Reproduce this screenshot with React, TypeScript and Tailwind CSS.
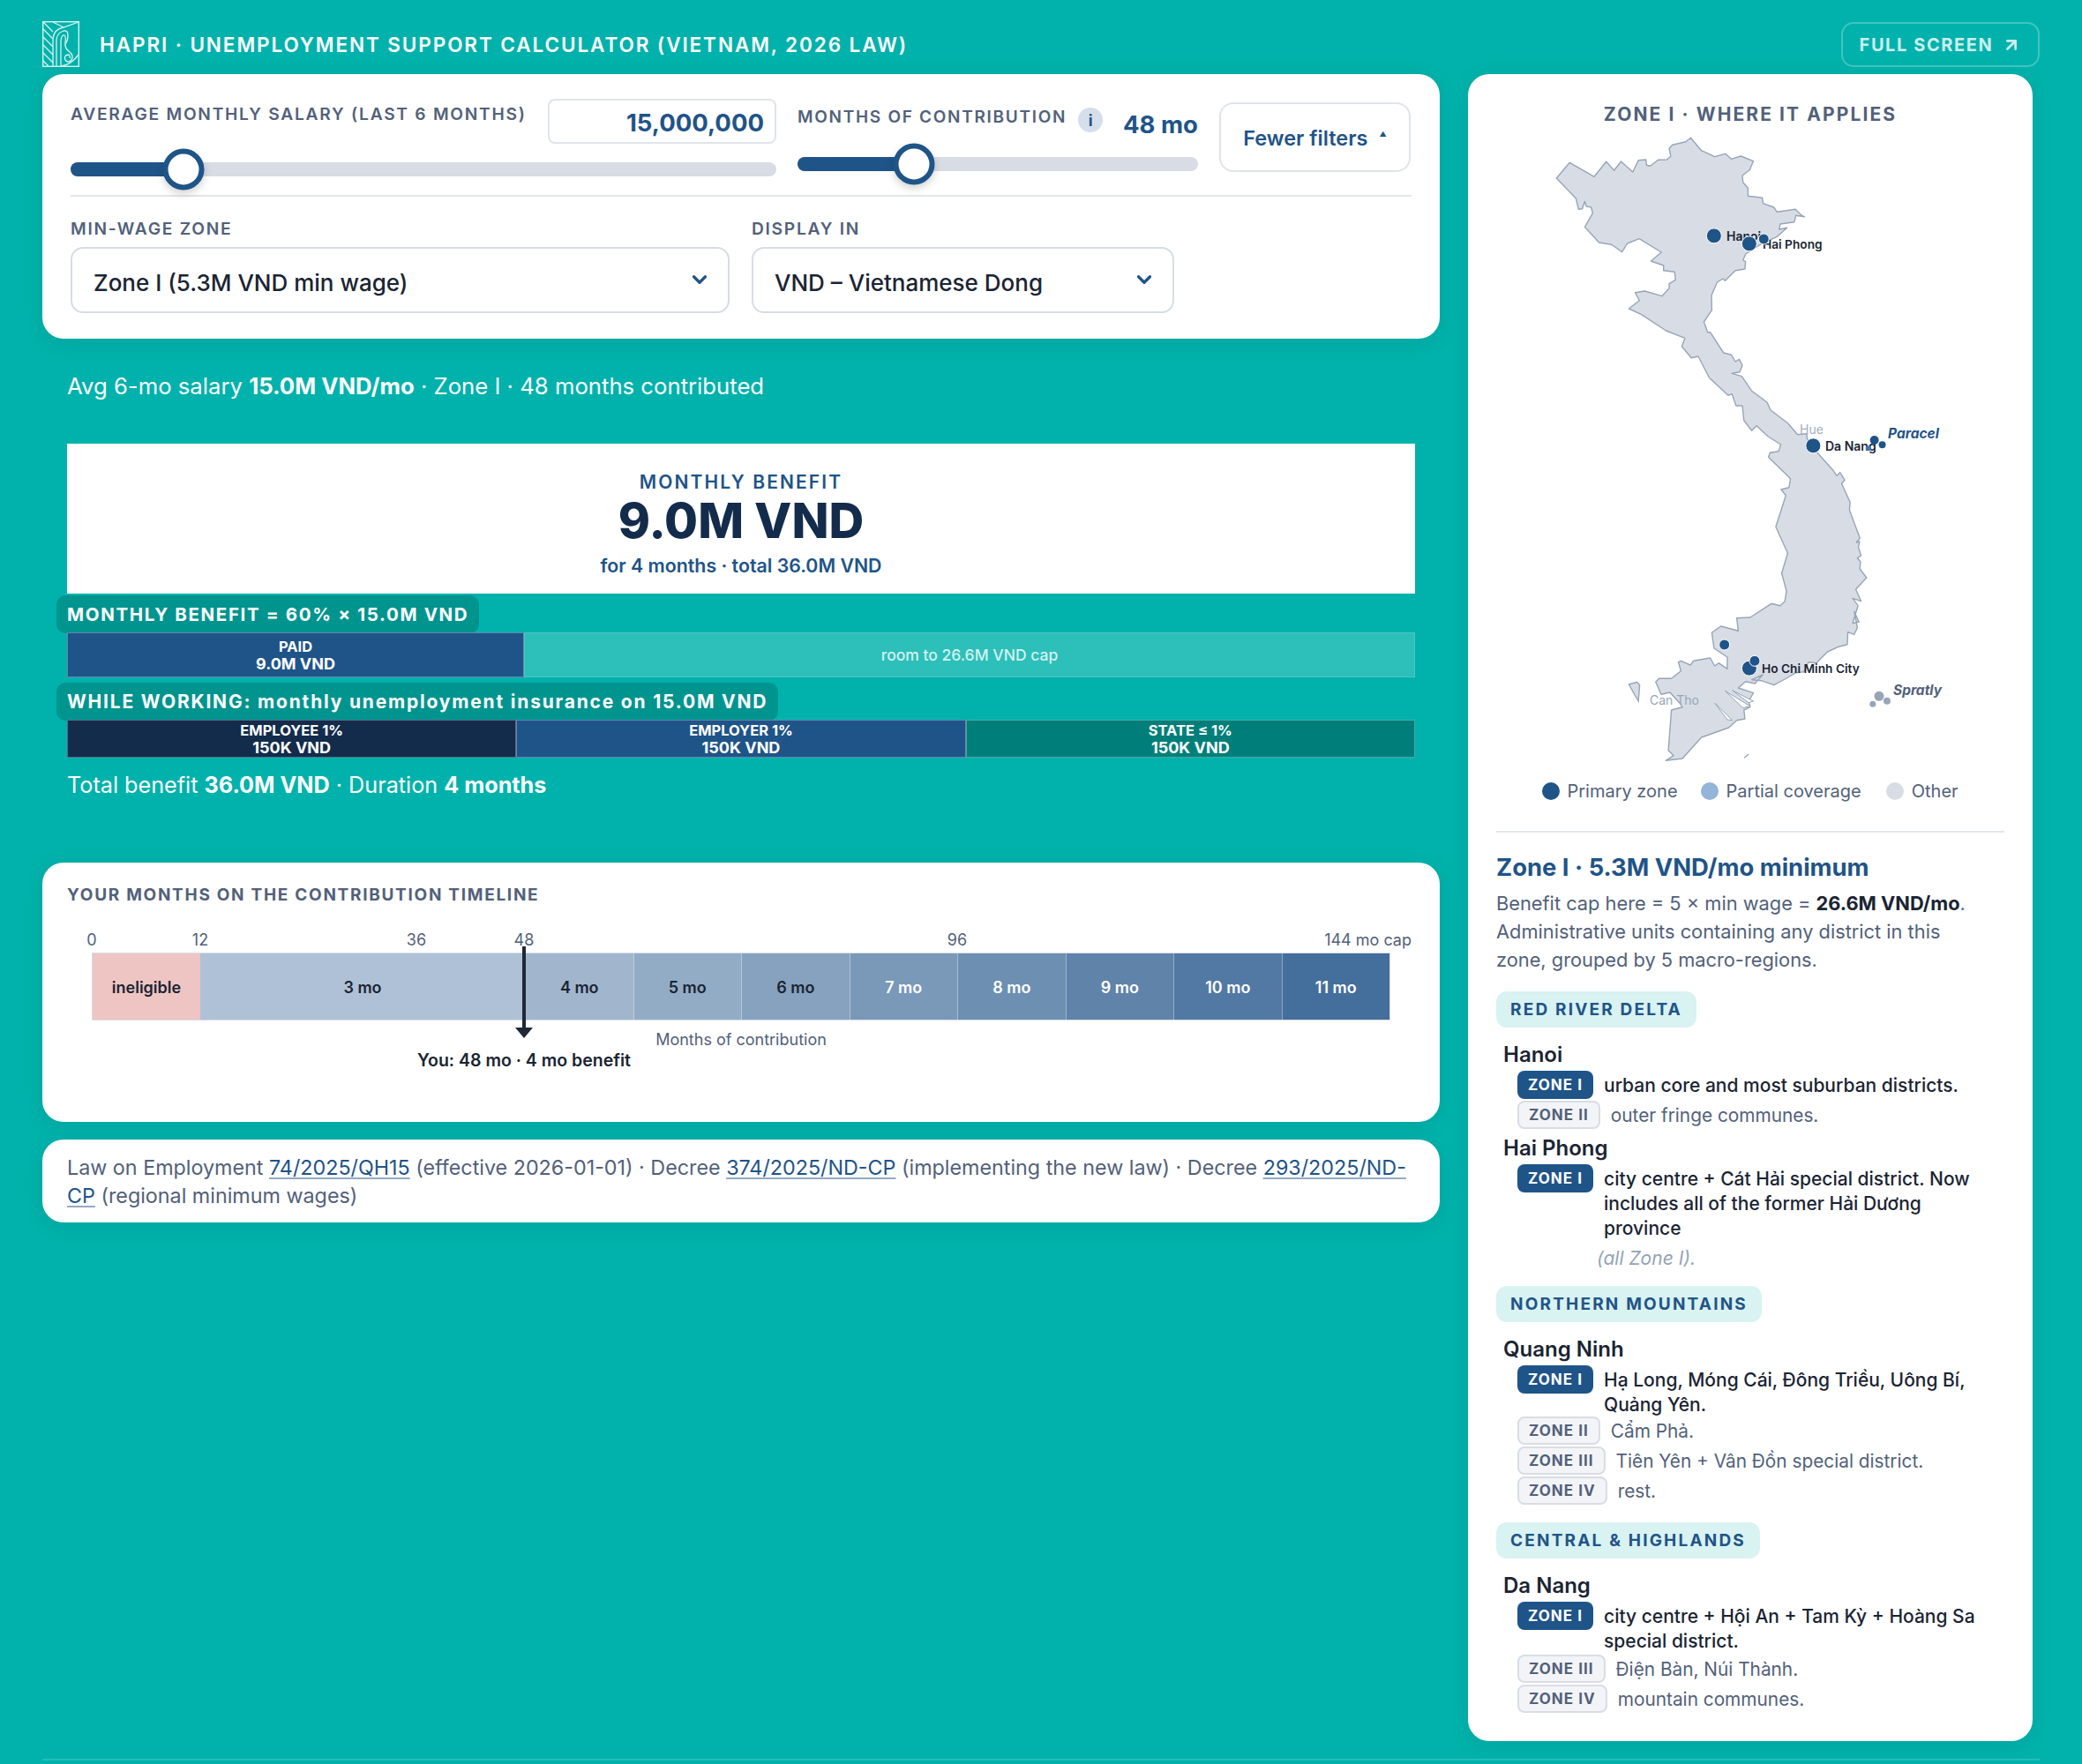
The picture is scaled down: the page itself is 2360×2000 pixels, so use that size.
import { ArrowUpRight, ChevronDown } from 'lucide-react';

const INK = 'text-[#1a2433]';

// map outline, read off in crop coordinates: x = 1700 + px / 2.8, y = base + py / 3
const north: number[][] = [
  [180,306],[222,253],[300,301],[338,250],[363,280],[385,249],[422,285],[440,245],[464,243],[466,262],[478,265],[503,244],[530,243],[543,232],[538,205],[548,193],[590,182],[606,169],[640,212],[682,233],[716,223],[735,241],[765,231],[805,248],[793,278],[770,297],[772,320],[788,340],[788,367],[833,373],[836,392],[870,405],[880,421],[938,412],[958,432],[967,437],[940,433],[935,455],[890,462],[887,480],[912,475],[880,505],[830,530],[800,550],[780,565],[772,585],[780,590],[778,615],[748,620],[715,655],[708,648],[690,660],[672,705],[673,755],[648,795],[660,830],[668,830],[710,900],[735,907],[748,930],[760,922],[770,942],[762,965],[737,970],[768,980],[800,1030],[848,1068],[860,1095],[890,1120],[915,1140],[945,1178],[975,1175],[975,1190],[1000,1230],[1058,1300],[1070,1318],[1080,1307],[1095,1333],
];
const south: number[][] = [
  [1085,205],[1112,268],[1110,295],[1143,390],[1132,405],[1142,402],[1138,420],[1147,450],[1135,458],[1145,470],[1143,495],[1164,525],[1130,565],[1147,605],[1120,595],[1137,620],[1120,680],[1140,675],[1125,640],[1135,695],[1125,718],[1105,710],[1103,752],[1075,760],[1040,777],[1005,815],[980,812],[965,845],[940,848],[905,870],[870,890],[830,875],[800,872],[835,855],[810,885],[780,878],[757,900],[805,917],[790,945],[795,965],[775,975],[778,1005],[752,1010],[727,1035],[640,1068],[580,1140],[527,1147],[552,1130],[535,1112],[545,975],[580,965],[570,950],[540,915],[512,922],[495,880],[505,868],[545,868],[575,842],[567,812],[575,808],[605,822],[615,808],[668,798],[682,825],[695,815],[722,835],[722,795],[680,765],[673,712],[702,690],[757,706],[752,662],[795,660],[862,613],[890,620],[905,605],[910,570],[895,510],[914,442],[876,352],[908,245],[893,225],[918,218],[923,188],[853,115],[858,100],[885,95],[892,72],
];
const northBack: number[][] = [
  [852,1185],[815,1148],[800,1165],[775,1130],[770,1080],[750,1080],[737,1040],[725,1045],[665,985],[630,912],[608,917],[578,878],[588,850],[528,825],[450,770],[410,750],[443,722],[430,695],[460,690],[515,707],[538,680],[538,665],[558,652],[555,625],[520,620],[520,603],[480,588],[513,558],[443,512],[405,528],[388,557],[355,532],[315,525],[270,472],[295,425],[290,405],[275,402],[270,385],[262,410],[250,412],[242,375],
];

const px = (x: number) => 1700 + x / 2.8;
const n = (y: number) => 100 + y / 3;
const s = (y: number) => 480 + y / 3;
const toPath = (pts: number[][], f: (y: number) => number) =>
  pts.map(([x, y]) => `${px(x).toFixed(1)} ${f(y).toFixed(1)}`).join(' L');

const mainland = `M${toPath(north, n)} L${toPath(south, s)} L${toPath(northBack, n)} Z`;
const island = `M${toPath([[410,888],[435,880],[444,890],[440,945]], s)} Z`;
const slits = [
  [[715,910],[795,962],[772,968]],
  [[738,908],[805,945],[790,950]],
  [[683,952],[738,1010],[722,1008]],
];

function VietnamMap() {
  const dot = (x: number, y: number, r: number, fill = '#1f5488', halo = true) => (
    <circle cx={px(x)} cy={y} r={r} fill={fill} stroke={halo ? '#fff' : 'none'} strokeWidth={1} />
  );
  return (
    <svg viewBox="1664 150 640 730" className="block w-[640px] h-[730px]" fontFamily="Inter, sans-serif">
      <path d={mainland} fill="#d8dde5" stroke="#97a5b7" strokeWidth={1.4} strokeLinejoin="round" />
      <path d={island} fill="#d8dde5" stroke="#97a5b7" strokeWidth={1.4} />
      {slits.map((p, i) => (
        <path key={i} d={`M${toPath(p, s)} Z`} fill="#fff" stroke="#97a5b7" strokeWidth={1} />
      ))}
      <path d={`M${px(776)} ${s(1138)} L${px(790)} ${s(1125)}`} stroke="#97a5b7" strokeWidth={1.4} />

      <text x={2040} y={492} fontSize={14} fill="#a3afbf">Hue</text>
      <text x={1870} y={799} fontSize={14} fill="#97a5b7">Can Tho</text>
      <text x={1957} y={273} fontSize={14} fontWeight={600} fill="#1a2433">Hanoi</text>
      <text x={1998} y={282} fontSize={13.7} fontWeight={600} fill="#1a2433">Hai Phong</text>
      <text x={2069} y={511} fontSize={14} fontWeight={600} fill="#1a2433">Da Nang</text>
      <text x={1997} y={763} fontSize={13.7} fontWeight={600} fill="#1a2433">Ho Chi Minh City</text>
      <text x={2140} y={497} fontSize={15.5} fontWeight={700} fontStyle="italic" fill="#1f5488">Paracel</text>
      <text x={2146} y={788} fontSize={15.5} fontWeight={700} fontStyle="italic" fill="#52617a">Spratly</text>

      {dot(680, n(502), 8.5)}
      {dot(792, n(529), 8.5)}
      {dot(838, n(513), 6)}
      {dot(995, n(1216), 8.5)}
      {dot(1189, n(1197), 5, '#1f5488', false)}
      {dot(1214, n(1213), 4, '#1f5488', false)}
      {dot(1170, n(1225), 3, '#3f78ad', false)}
      {dot(792, s(833), 8.5)}
      {dot(809, s(808), 6)}
      {dot(713, s(753), 6)}
      {dot(1204, s(928), 5.5, '#98a5b6', false)}
      {dot(1229, s(944), 4, '#98a5b6', false)}
      {dot(1184, s(955), 3.5, '#98a5b6', false)}
    </svg>
  );
}

function Logo() {
  return (
    <svg viewBox="0 0 42 52" className="w-[42px] h-[52px]" fill="none" stroke="#d8f3f1" strokeWidth={1.3}>
      <rect x="0.7" y="0.7" width="40.6" height="50.6" strokeWidth={1.4} />
      <path d="M12 51 V20 Q13 9 24 7 L41 1" />
      <path d="M16 51 V21 Q17 13 24 11 Q29 10 29 16 Q29 22 26 26" />
      <path d="M21 51 V22 Q22 15 25 16 Q27 17 26 24 Q25 31 31 35 Q36 39 33 44 Q29 48 26 44 Q24 39 29 38 Q32 38 31 42" />
      <path d="M21 51 Q32 50 41 38" />
      <path d="M1 9 L12 20 M1 18 L12 29 M1 27 L12 38 M1 36 L12 47 M1 45 L7 51" />
      <path d="M12 1 L24 7 M1 1 L12 12" />
    </svg>
  );
}

function Slider({ width, fill, thumb }: { width: string; fill: string; thumb: string }) {
  return (
    <div className={`relative h-[16px] rounded-full bg-[#d8dde5] ${width}`}>
      <div className={`h-full rounded-full bg-[#1f5488] ${fill}`} />
      <div className={`absolute top-1/2 -translate-y-1/2 -translate-x-1/2 w-[47px] h-[47px] rounded-full bg-white border-[6px] border-[#1f5488] shadow-[0_4px_10px_rgba(0,0,0,0.18)] ${thumb}`} />
    </div>
  );
}

function Select({ label, value, width }: { label: string; value: string; width: string }) {
  return (
    <div className={width}>
      <div className="text-[19.2px] leading-[24px] font-semibold tracking-[0.09em] text-[#52617a]">{label}</div>
      <div className="mt-[9px] h-[75px] rounded-[14px] border-2 border-[#d8dde5] flex items-center justify-between pl-[24px] pr-[19px]">
        <span className={`pt-[5px] text-[26px] font-medium ${INK}`}>{value}</span>
        <ChevronDown className="w-[26px] h-[26px] text-[#1f5488] -mt-[1px]" strokeWidth={3} />
      </div>
    </div>
  );
}

function BarCell({ top, bottom, className }: { top: string; bottom: string; className: string }) {
  return (
    <div className={`flex flex-col items-center justify-center text-white font-bold leading-[19px] text-[18px] border border-white/30 ${className}`}>
      <span className="text-[16.5px]">{top}</span>
      <span>{bottom}</span>
    </div>
  );
}

const steps = [
  { label: '4 mo', cls: 'bg-[#a1b6cd] text-[#1a2433]' },
  { label: '5 mo', cls: 'bg-[#93acc6] text-[#1a2433]' },
  { label: '6 mo', cls: 'bg-[#86a2bf] text-[#1a2433]' },
  { label: '7 mo', cls: 'bg-[#7a99b9] text-white' },
  { label: '8 mo', cls: 'bg-[#6d8fb2] text-white' },
  { label: '9 mo', cls: 'bg-[#6083aa] text-white' },
  { label: '10 mo', cls: 'bg-[#5279a4] text-white' },
  { label: '11 mo', cls: 'bg-[#446e9c] text-white' },
];

const ticks = [
  { label: '0', left: 'left-[56px]' },
  { label: '12', left: 'left-[179px]' },
  { label: '36', left: 'left-[424px]' },
  { label: '48', left: 'left-[546px]' },
  { label: '96', left: 'left-[1037px]' },
];

function Timeline() {
  return (
    <div className="h-[294px] rounded-[24px] bg-white shadow-[0_4px_24px_rgba(0,0,0,0.08)] relative mt-[70px] -mx-[28px]">
      <div className="pt-[25px] pl-[28px] text-[19px] leading-[24px] font-bold tracking-[0.09em] text-[#52617a]">
        YOUR MONTHS ON THE CONTRIBUTION TIMELINE
      </div>
      <div className="ml-[56px] mt-[53px] w-[1472px] h-[77px] flex text-[18px] font-semibold border border-[#d5dde7]">
        <div className="w-[122px] pt-[2px] flex items-center justify-center bg-[#efc5c3] text-[#1a2433]">ineligible</div>
        <div className="w-[368px] pt-[2px] flex items-center justify-center bg-[#afc1d6] text-[#1a2433]">3 mo</div>
        {steps.map((step) => (
          <div key={step.label} className={`flex-1 pt-[2px] flex items-center justify-center border-l border-white/40 ${step.cls}`}>
            {step.label}
          </div>
        ))}
      </div>
      {ticks.map((tick) => (
        <span key={tick.label} className={`absolute top-[76px] -translate-x-1/2 text-[18px] leading-[24px] text-[#52617a] ${tick.left}`}>
          {tick.label}
        </span>
      ))}
      <span className="absolute top-[76px] right-[32px] text-[18px] leading-[24px] text-[#52617a]">144 mo cap</span>
      <svg className="absolute left-[536px] top-[95px] w-[20px] h-[104px]" viewBox="0 0 20 104">
        <rect x="8" y="0" width="4" height="94" fill="#1f2937" />
        <path d="M0 92 H20 L10 104 Z" fill="#1f2937" />
      </svg>
      <span className="absolute left-[792px] top-[189px] -translate-x-1/2 text-[18px] leading-[24px] text-[#52617a] whitespace-nowrap">Months of contribution</span>
      <span className={`absolute left-[546px] top-[212px] -translate-x-1/2 text-[19.5px] leading-[24px] font-semibold whitespace-nowrap ${INK}`}>You: 48 mo · 4 mo benefit</span>
    </div>
  );
}

const Law = ({ children }: { children: React.ReactNode }) => (
  <a className="text-[#1f5488] underline decoration-[#94aac4] decoration-2 underline-offset-[3px]">{children}</a>
);

function Badge({ zone, primary }: { zone: string; primary?: boolean }) {
  return primary ? (
    <span className="shrink-0 h-[32px] pt-[2px] rounded-[8px] bg-[#1f5488] text-white text-[17px] font-bold tracking-[0.06em] px-[12px] flex items-center">{zone}</span>
  ) : (
    <span className="shrink-0 h-[32px] pt-[2px] rounded-[8px] bg-[#f3f4f7] border-2 border-[#d8dde5] text-[#52617a] text-[17px] font-bold tracking-[0.06em] px-[11px] flex items-center">{zone}</span>
  );
}

function ZoneRow({ zone, primary, children, tight }: { zone: string; primary?: boolean; children: React.ReactNode; tight?: boolean }) {
  return (
    <div className={`flex items-start gap-[12px] ml-[24px] ${tight ? '-mb-[2px]' : ''}`}>
      <Badge zone={zone} primary={primary} />
      <div className={`max-w-[424px] pt-[3px] -mb-[1px] leading-[28px] ${primary ? `text-[21px] font-medium ${INK}` : 'text-[20.8px] text-[#52617a]'}`}>{children}</div>
    </div>
  );
}

function RegionChip({ children, className }: { children: React.ReactNode; className: string }) {
  return (
    <div className={`w-fit h-[41px] rounded-[12px] bg-[#d9f2f2] px-[16px] pt-[1px] flex items-center text-[19px] font-bold tracking-[0.115em] text-[#1f5488] ${className}`}>
      {children}
    </div>
  );
}

function Province({ name, className, children }: { name: string; className: string; children: React.ReactNode }) {
  return (
    <div className={className}>
      <div className={`ml-[8px] pt-[2px] -mb-[2px] text-[24px] leading-[30px] font-semibold ${INK}`}>{name}</div>
      <div className="mt-[5px] flex flex-col gap-[2px]">{children}</div>
    </div>
  );
}

export default function App() {
  return (
    <div className="min-h-[2000px] bg-[#00b2ab] px-[48px] font-['Inter',sans-serif]">
      {/* Header */}
      <header className="h-[84px] flex items-center justify-between pt-[16px]">
        <div className="flex items-center gap-[23px]">
          <Logo />
          <span className="pt-[2px] text-[22.5px] font-semibold tracking-[0.085em] text-white">
            HAPRI · UNEMPLOYMENT SUPPORT CALCULATOR (VIETNAM, 2026 LAW)
          </span>
        </div>
        <button className="h-[51px] w-[225px] pt-[2px] rounded-[14px] border-2 border-white/25 flex items-center justify-center gap-[10px] text-[20px] font-bold tracking-[0.08em] text-[#cdeeee]">
          FULL SCREEN
          <ArrowUpRight className="w-[22px] h-[22px]" strokeWidth={3} />
        </button>
      </header>

      <div className="flex items-start gap-[32px]">
        {/* Left column */}
        <div className="w-[1584px]">
          <section className="h-[300px] rounded-[24px] bg-white shadow-[0_4px_24px_rgba(0,0,0,0.08)] px-[32px] pt-[28px]">
            <div className="h-[109px] flex items-start gap-[24px]">
              <div className="w-[800px]">
                <div className="flex items-start justify-between">
                  <span className="mt-[5px] text-[19.2px] leading-[24px] font-semibold tracking-[0.09em] text-[#52617a]">
                    AVERAGE MONTHLY SALARY (LAST 6 MONTHS)
                  </span>
                  <input
                    readOnly
                    value="15,000,000"
                    className="w-[259px] h-[51px] rounded-[8px] border-2 border-[#e0e4ea] pr-[12px] pt-[3px] text-right text-[27.5px] font-bold text-[#1f5488] outline-none"
                  />
                </div>
                <div className="mt-[21px]">
                  <Slider width="w-[800px]" fill="w-[128px]" thumb="left-[128px]" />
                </div>
              </div>
              <div className="w-[454px]">
                <div className="h-[66px] flex items-start">
                  <span className="mt-[9px] text-[19px] leading-[24px] font-semibold tracking-[0.09em] text-[#52617a] whitespace-nowrap">
                    MONTHS OF CONTRIBUTION
                  </span>
                  <span className="ml-[13px] mt-[10px] w-[28px] h-[28px] rounded-full bg-[#d5dfeb] text-[#1f5488] text-[18px] font-bold flex items-center justify-center">i</span>
                  <span className="ml-auto mt-[11px] text-[27.5px] leading-[36px] font-bold text-[#1f5488] whitespace-nowrap">48 mo</span>
                </div>
                <Slider width="w-[454px]" fill="w-[132px]" thumb="left-[132px]" />
              </div>
              <button className="mt-[4px] w-[217px] h-[79px] rounded-[16px] border-2 border-[#e0e4ea] flex items-center justify-center gap-[13px] pt-[3px] text-[23.5px] font-semibold text-[#1f5488]">
                Fewer filters
                <span className="text-[8px] -mt-[10px]">▲</span>
              </button>
            </div>
            <div className="border-t-2 border-[#e2e6ec] pt-[24px] flex gap-[25px]">
              <Select label="MIN-WAGE ZONE" value="Zone I (5.3M VND min wage)" width="w-[747px]" />
              <Select label="DISPLAY IN" value="VND – Vietnamese Dong" width="w-[479px]" />
            </div>
          </section>

          <div className="px-[28px]">
            <p className="mt-[36px] text-[25.7px] leading-[36px] text-white">
              Avg 6-mo salary <b>15.0M VND/mo</b> · Zone I · 48 months contributed
            </p>

            <div className="mt-[47px] h-[170px] bg-white flex flex-col items-center">
              <div className="mt-[32px] text-[21px] leading-[24px] font-semibold tracking-[0.1em] text-[#1f5488]">MONTHLY BENEFIT</div>
              <div className="text-[55px] leading-[62px] font-extrabold text-[#132c4c]">9.0M VND</div>
              <div className="mt-[5px] text-[21.3px] leading-[30px] font-semibold text-[#1f5488]">for 4 months · total 36.0M VND</div>
            </div>

            <div className="mt-[2px] -ml-[12px] w-fit h-[43px] pt-[1px] rounded-[10px] bg-[#00948f] px-[12px] flex items-center text-[20.5px] font-bold tracking-[0.08em] text-white">
              MONTHLY BENEFIT = 60% × 15.0M VND
            </div>
            <div className="-mt-px h-[51px] flex">
              <BarCell top="PAID" bottom="9.0M VND" className="w-[518px] bg-[#1f5488]" />
              <div className="flex-1 pt-[1px] flex items-center justify-center bg-[#2dbfb9] border border-white/15 text-[17.5px] font-medium text-[#d5f2f0]">
                room to 26.6M VND cap
              </div>
            </div>

            <div className="mt-[6px] -ml-[12px] w-fit h-[43px] pt-[1px] rounded-[10px] bg-[#00948f] px-[12px] flex items-center text-[21px] font-bold tracking-[0.086em] text-white">
              WHILE WORKING: monthly unemployment insurance on 15.0M VND
            </div>
            <div className="-mt-px h-[43px] flex">
              <BarCell top="EMPLOYEE 1%" bottom="150K VND" className="flex-1 bg-[#132c4c]" />
              <BarCell top="EMPLOYER 1%" bottom="150K VND" className="flex-1 bg-[#1f5488]" />
              <BarCell top="STATE ≤ 1%" bottom="150K VND" className="flex-1 bg-[#007f7a]" />
            </div>

            <p className="mt-[13px] text-[25.2px] leading-[36px] text-white">
              Total benefit <b>36.0M VND</b> · Duration <b>4 months</b>
            </p>

            <Timeline />

            <div className="mt-[20px] -mx-[28px] h-[94px] rounded-[24px] bg-white shadow-[0_4px_24px_rgba(0,0,0,0.08)] px-[28px] pt-[16px] text-[23.3px] leading-[32px] text-[#52617a]">
              <div className="whitespace-nowrap">
                Law on Employment <Law>74/2025/QH15</Law> (effective 2026-01-01) · Decree <Law>374/2025/ND-CP</Law> (implementing the new law) · Decree <Law>293/2025/ND-</Law>
              </div>
              <div>
                <Law>CP</Law> (regional minimum wages)
              </div>
            </div>
          </div>
        </div>

        {/* Right panel */}
        <aside className="w-[640px] rounded-[24px] bg-white shadow-[0_4px_24px_rgba(0,0,0,0.08)] px-[32px] pt-[34px] pb-[32px]">
          <div className="text-center text-[21px] leading-[24px] font-bold tracking-[0.1em] text-[#52617a]">ZONE I · WHERE IT APPLIES</div>
          <div className="-mx-[32px] mt-[8px]">
            <VietnamMap />
          </div>
          <div className="mt-[3px] h-[28px] flex items-center justify-center text-[20px] text-[#52617a]">
            <span className="w-[20px] h-[20px] rounded-full bg-[#1f5488]" />
            <span className="ml-[8px]">Primary zone</span>
            <span className="ml-[26px] w-[20px] h-[20px] rounded-full bg-[#94b4d8]" />
            <span className="ml-[9px]">Partial coverage</span>
            <span className="ml-[28px] w-[20px] h-[20px] rounded-full bg-[#d8dde5]" />
            <span className="ml-[9px]">Other</span>
          </div>
          <div className="mt-[31px] border-t-2 border-[#e2e6ec]" />
          <h2 className="mt-[21px] text-[27.4px] leading-[36px] font-bold text-[#1f5488]">Zone I · 5.3M VND/mo minimum</h2>
          <p className="mt-[7px] text-[21.8px] leading-[32px] text-[#52617a]">
            Benefit cap here = 5 × min wage = <b className={INK}>26.6M VND/mo</b>.<br />
            Administrative units containing any district in this<br />
            zone, grouped by 5 macro-regions.
          </p>

          <RegionChip className="mt-[20px]">RED RIVER DELTA</RegionChip>
          <Province name="Hanoi" className="mt-[14px]">
            <ZoneRow zone="ZONE I" primary>urban core and most suburban districts.</ZoneRow>
            <ZoneRow zone="ZONE II">outer fringe communes.</ZoneRow>
          </Province>
          <Province name="Hai Phong" className="mt-[5px]">
            <ZoneRow zone="ZONE I" primary>
              city centre + Cát Hải special district. Now includes all of the former Hải Dương province
            </ZoneRow>
            <div className="ml-[114px] mt-[5px] text-[21px] leading-[28px] italic text-[#94a3b8]">(all Zone I).</div>
          </Province>

          <RegionChip className="mt-[17px]">NORTHERN MOUNTAINS</RegionChip>
          <Province name="Quang Ninh" className="mt-[14px]">
            <ZoneRow zone="ZONE I" primary tight>Hạ Long, Móng Cái, Đông Triều, Uông Bí, Quảng Yên.</ZoneRow>
            <ZoneRow zone="ZONE II">Cẩm Phả.</ZoneRow>
            <ZoneRow zone="ZONE III">Tiên Yên + Vân Đồn special district.</ZoneRow>
            <ZoneRow zone="ZONE IV">rest.</ZoneRow>
          </Province>

          <RegionChip className="mt-[20px]">CENTRAL &amp; HIGHLANDS</RegionChip>
          <Province name="Da Nang" className="mt-[14px]">
            <ZoneRow zone="ZONE I" primary>city centre + Hội An + Tam Kỳ + Hoàng Sa special district.</ZoneRow>
            <ZoneRow zone="ZONE III">Điện Bàn, Núi Thành.</ZoneRow>
            <ZoneRow zone="ZONE IV">mountain communes.</ZoneRow>
          </Province>
        </aside>
      </div>

      <div className="mt-[20px] border-t-2 border-white/15" />
    </div>
  );
}
